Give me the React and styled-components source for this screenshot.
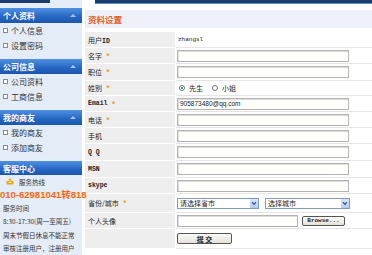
import React from "react";
import styled, { createGlobalStyle } from "styled-components";

const GlobalStyle = createGlobalStyle`
  body {
    margin: 0;
    background: #fff;
    font-family: "Noto Sans CJK SC", "Noto Sans", sans-serif;
    color: #222;
  }
`;

const Page = styled.div`
  display: flex;
  width: 372px;
  height: 255px;
  overflow: hidden;
`;

const Sidebar = styled.aside`
  width: 82px;
  flex-shrink: 0;
  background: #e4ecf7;
  display: flex;
  flex-direction: column;
  position: relative;
  z-index: 1;
`;

const SideTop = styled.div`
  width: 50px;
  height: 3px;
  background: #1c3a6c;
  margin-bottom: 5px;
`;

const Section = styled.div`
  margin-bottom: 6px;
`;

const SectionHead = styled.div`
  height: 15px;
  display: flex;
  align-items: center;
  justify-content: space-between;
  padding: 0 6px 0 3px;
  background: linear-gradient(#4f92e2, #2566c2 60%, #1b56ad);
  color: #fff;
  font-size: 8px;
  font-weight: bold;
`;

const Arrow = styled.span`
  width: 0;
  height: 0;
  border-left: 3px solid transparent;
  border-right: 3px solid transparent;
  border-bottom: 3px solid #a9c6ee;
`;

const SideItem = styled.div`
  height: 15px;
  display: flex;
  align-items: center;
  gap: 3px;
  padding-left: 3px;
  font-size: 8px;
  color: #333;
`;

const Bullet = styled.span`
  width: 3px;
  height: 3px;
  border: 1px solid #8a8a8a;
  background: #fff;
`;

const ServiceLine = styled.div`
  height: ${(p) => p.h || 14}px;
  display: flex;
  align-items: center;
  gap: 5px;
  padding-left: ${(p) => (p.indent ? 6 : 3)}px;
  font-size: 6.5px;
  color: #333;
  white-space: nowrap;
`;

const Phone = styled.div`
  height: 13px;
  display: flex;
  align-items: center;
  font-family: "Liberation Sans", Arial, "Noto Sans CJK SC", sans-serif;
  font-size: 9.5px;
  font-weight: bold;
  color: #f26a12;
  white-space: nowrap;
`;

const Main = styled.main`
  flex: 1;
  margin-left: 3px;
  display: flex;
  flex-direction: column;
`;

const MainTop = styled.div`
  height: 3px;
  margin-left: 10px;
  background: #1c3a6c;
  border-bottom: 1px solid #5d8acb;
`;

const TitleBar = styled.div`
  height: 18px;
  margin-top: 6px;
  background: #eef0f9;
  display: flex;
  align-items: center;
  padding-left: 3px;
  font-size: 8.5px;
  font-weight: bold;
  color: #e4612a;
`;

const Form = styled.div`
  margin-top: 4px;
  display: flex;
  flex-direction: column;
`;

const Row = styled.div`
  display: grid;
  grid-template-columns: 91px 1fr;
  height: ${(p) => p.h || 16}px;
`;

const Label = styled.div`
  background: #eeeeee;
  border-bottom: 1px solid #fff;
  border-right: 1px solid #fff;
  display: flex;
  align-items: center;
  gap: 4px;
  padding-left: 3px;
  font-size: 7px;
  color: #222;
`;

const Latin = styled.span`
  font-family: "Liberation Mono", "DejaVu Sans Mono", monospace;
  font-size: 6.5px;
  font-weight: bold;
`;

const Star = styled.span`
  color: #f39a2c;
  font-size: 8px;
  font-weight: bold;
  line-height: 1;
`;

const Value = styled.div`
  border-bottom: 1px solid #e6e6e6;
  display: flex;
  align-items: center;
  gap: 4px;
  padding-left: 1px;
`;

const Plain = styled.span`
  font-family: "Liberation Mono", monospace;
  font-size: 6px;
  color: #222;
  padding-left: 1px;
`;

const TextBox = styled.div`
  box-sizing: border-box;
  width: ${(p) => p.w || 172}px;
  height: 12px;
  border: 1px solid #b3b3b3;
  box-shadow: inset 1px 1px 0 #dedede;
  background: #fffffb;
  display: flex;
  align-items: center;
  padding-left: 2px;
  font-family: "Liberation Sans", Arial, sans-serif;
  font-size: 6.5px;
  color: #222;
`;

const Radio = styled.span`
  box-sizing: border-box;
  width: 6px;
  height: 6px;
  border-radius: 50%;
  border: 1px solid #6a7a8a;
  background: #fff;
  display: flex;
  align-items: center;
  justify-content: center;
  margin-left: 2px;
  &::after {
    content: "";
    width: 2px;
    height: 2px;
    border-radius: 50%;
    background: ${(p) => (p.checked ? "#2a7a2a" : "transparent")};
  }
`;

const RadioText = styled.span`
  font-size: 7px;
  margin-right: 3px;
`;

const Select = styled.div`
  box-sizing: border-box;
  width: ${(p) => p.w}px;
  height: 11px;
  border: 1px solid #7f9db9;
  background: #fff;
  display: flex;
  align-items: center;
  justify-content: space-between;
  padding-left: 2px;
  font-size: 7px;
  margin-right: 2px;
`;

const SelectBtn = styled.span`
  width: 8px;
  height: 9px;
  background: linear-gradient(#dbe6fa, #b7cbef);
  display: flex;
  align-items: center;
  justify-content: center;
`;

const Button = styled.div`
  box-sizing: border-box;
  width: ${(p) => p.w}px;
  height: ${(p) => p.h || 10}px;
  border: 1px solid #555;
  border-radius: 2px;
  background: linear-gradient(#fbfbf8, #e4e2d8);
  display: flex;
  align-items: center;
  justify-content: center;
  font-family: ${(p) => (p.latin ? '"Liberation Mono", monospace' : '"Noto Sans CJK SC", sans-serif')};
  font-size: ${(p) => (p.latin ? 6 : 7)}px;
  font-weight: bold;
  color: #222;
`;

const Chevron = () => (
  <svg width="6" height="5" viewBox="0 0 6 5">
    <path d="M1 1.2 L3 3.4 L5 1.2" fill="none" stroke="#2b4d8f" strokeWidth="1.2" />
  </svg>
);

const HotlineIcon = () => (
  <svg width="8" height="7" viewBox="0 0 8 7">
    <rect x="0.5" y="3" width="7" height="3.5" rx="0.8" fill="#e9a31c" />
    <circle cx="4" cy="2" r="1.8" fill="#f2c23a" />
    <rect x="2.5" y="4" width="3" height="1" fill="#fff4c8" />
  </svg>
);

const menu = [
  { title: "个人资料", items: ["个人信息", "设置密码"] },
  { title: "公司信息", items: ["公司资料", "工商信息"] },
  { title: "我的商友", items: ["我的商友", "添加商友"] },
];

const SimpleLabel = ({ children, star }) => (
  <Label>
    <span>{children}</span>
    {star && <Star>*</Star>}
  </Label>
);

export default function App() {
  return (
    <Page>
      <GlobalStyle />
      <Sidebar>
        <SideTop />
        {menu.map((m) => (
          <Section key={m.title}>
            <SectionHead>
              <span>{m.title}</span>
              <Arrow />
            </SectionHead>
            {m.items.map((it) => (
              <SideItem key={it}>
                <Bullet />
                {it}
              </SideItem>
            ))}
          </Section>
        ))}
        <SectionHead>
          <span>客服中心</span>
        </SectionHead>
        <ServiceLine h={13} indent>
          <HotlineIcon />
          服务热线
        </ServiceLine>
        <Phone>010-62981041转818</Phone>
        <ServiceLine>服务时间</ServiceLine>
        <ServiceLine>8:30-17:30(周一至周五)</ServiceLine>
        <ServiceLine>周末节假日休息不能正常</ServiceLine>
        <ServiceLine>审核注册用户，注册用户</ServiceLine>
      </Sidebar>

      <Main>
        <MainTop />
        <TitleBar>资料设置</TitleBar>
        <Form>
          <Row>
            <Label>
              <span>
                用户<Latin>ID</Latin>
              </span>
            </Label>
            <Value>
              <Plain>zhangsl</Plain>
            </Value>
          </Row>
          <Row>
            <SimpleLabel star>名字</SimpleLabel>
            <Value>
              <TextBox />
            </Value>
          </Row>
          <Row h={17}>
            <SimpleLabel star>职位</SimpleLabel>
            <Value>
              <TextBox />
            </Value>
          </Row>
          <Row h={15}>
            <SimpleLabel star>姓别</SimpleLabel>
            <Value>
              <Radio checked />
              <RadioText>先生</RadioText>
              <Radio />
              <RadioText>小姐</RadioText>
            </Value>
          </Row>
          <Row>
            <Label>
              <Latin>Email</Latin>
              <Star>*</Star>
            </Label>
            <Value>
              <TextBox>905873480@qq.com</TextBox>
            </Value>
          </Row>
          <Row>
            <SimpleLabel star>电话</SimpleLabel>
            <Value>
              <TextBox />
            </Value>
          </Row>
          <Row>
            <SimpleLabel>手机</SimpleLabel>
            <Value>
              <TextBox />
            </Value>
          </Row>
          <Row h={17}>
            <Label>
              <Latin>Q Q</Latin>
            </Label>
            <Value>
              <TextBox />
            </Value>
          </Row>
          <Row h={17}>
            <Label>
              <Latin>MSN</Latin>
            </Label>
            <Value>
              <TextBox />
            </Value>
          </Row>
          <Row>
            <Label>
              <Latin>skype</Latin>
            </Label>
            <Value>
              <TextBox />
            </Value>
          </Row>
          <Row h={19}>
            <SimpleLabel star>省份/城市</SimpleLabel>
            <Value>
              <Select w={82}>
                请选择省市
                <SelectBtn>
                  <Chevron />
                </SelectBtn>
              </Select>
              <Select w={85}>
                选择城市
                <SelectBtn>
                  <Chevron />
                </SelectBtn>
              </Select>
            </Value>
          </Row>
          <Row>
            <SimpleLabel>个人头像</SimpleLabel>
            <Value>
              <TextBox w={121} />
              <Button w={43} h={10} latin>
                Browse...
              </Button>
            </Value>
          </Row>
          <Row h={20}>
            <Label />
            <Value>
              <Button w={55} h={11}>
                提 交
              </Button>
            </Value>
          </Row>
        </Form>
      </Main>
    </Page>
  );
}
